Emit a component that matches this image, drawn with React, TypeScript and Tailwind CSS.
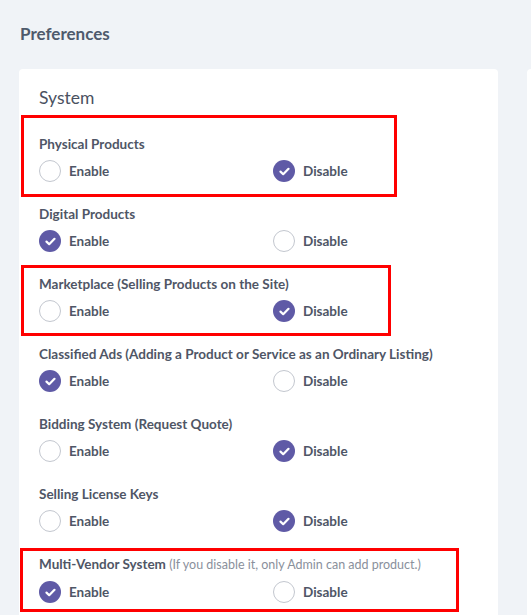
import React from 'react';

type Pref = {
  title: string;
  note?: string;
  enabled: boolean;
};

const prefs: Pref[] = [
  { title: 'Physical Products', enabled: false },
  { title: 'Digital Products', enabled: true },
  { title: 'Marketplace (Selling Products on the Site)', enabled: false },
  { title: 'Classified Ads (Adding a Product or Service as an Ordinary Listing)', enabled: true },
  { title: 'Bidding System (Request Quote)', enabled: false },
  { title: 'Selling License Keys', enabled: false },
  { title: 'Multi-Vendor System', note: '(If you disable it, only Admin can add product.)', enabled: true },
];

const Radio = ({ checked }: { checked: boolean }) =>
  checked ? (
    <span className="w-[22px] h-[22px] rounded-full bg-[#5f5aa6] flex items-center justify-center shrink-0">
      <svg width="11" height="9" viewBox="0 0 11 9" fill="none">
        <path d="M1.5 4.6L4.2 7.2L9.5 1.8" stroke="white" strokeWidth="2.2" strokeLinecap="round" strokeLinejoin="round" />
      </svg>
    </span>
  ) : (
    <span className="w-[22px] h-[22px] rounded-full bg-white border border-[#c3c7cf] shrink-0" />
  );

const Option = ({ label, checked }: { label: string; checked: boolean }) => (
  <label className="flex items-center gap-2 cursor-pointer">
    <Radio checked={checked} />
    <span className="text-[13.5px] font-bold text-[#4f5666] leading-[22px]">{label}</span>
  </label>
);

export default function App() {
  return (
    <div
      className="h-screen bg-[#f0f3f7] overflow-hidden"
      style={{ fontFamily: 'Lato, "Liberation Sans", sans-serif' }}
    >
      <div className="pl-[19px] pt-[24px]">
        <h1 className="text-[17px] font-bold text-[#4e5a6c] leading-[20px] pl-px">Preferences</h1>
        <div className="flex gap-[29px] mt-[25px]">
          <div className="relative w-[479px] shrink-0 bg-white rounded-[4px] pl-5 pt-[17px] pb-10">
            <h2 className="text-[17.5px] text-[#4a5161] leading-[24px]">System</h2>
            <div className="mt-6 flex flex-col gap-[22px]">
              {prefs.map((p) => (
                <div key={p.title}>
                  <div className="text-[13.5px] font-bold text-[#4f5666] leading-[20px] whitespace-nowrap">
                    {p.title}
                    {p.note && (
                      <span className="font-normal text-[12.5px] text-[#8a909c]"> {p.note}</span>
                    )}
                  </div>
                  <div className="mt-[6px] flex">
                    <div className="w-[234px]">
                      <Option label="Enable" checked={p.enabled} />
                    </div>
                    <Option label="Disable" checked={!p.enabled} />
                  </div>
                </div>
              ))}
            </div>
            {/* highlight annotations */}
            <div className="absolute left-[2px] top-[46px] w-[376px] h-[82px] border-[3px] border-[#ff0000] pointer-events-none" />
            <div className="absolute left-[2px] top-[196px] w-[370px] h-[71px] border-[3px] border-[#ff0000] pointer-events-none" />
            <div className="absolute left-[1px] top-[479px] w-[439px] h-[64px] border-[3px] border-[#ff0000] pointer-events-none" />
          </div>
          <div className="w-[200px] shrink-0 bg-white rounded-[4px] h-[700px]" />
        </div>
      </div>
    </div>
  );
}
